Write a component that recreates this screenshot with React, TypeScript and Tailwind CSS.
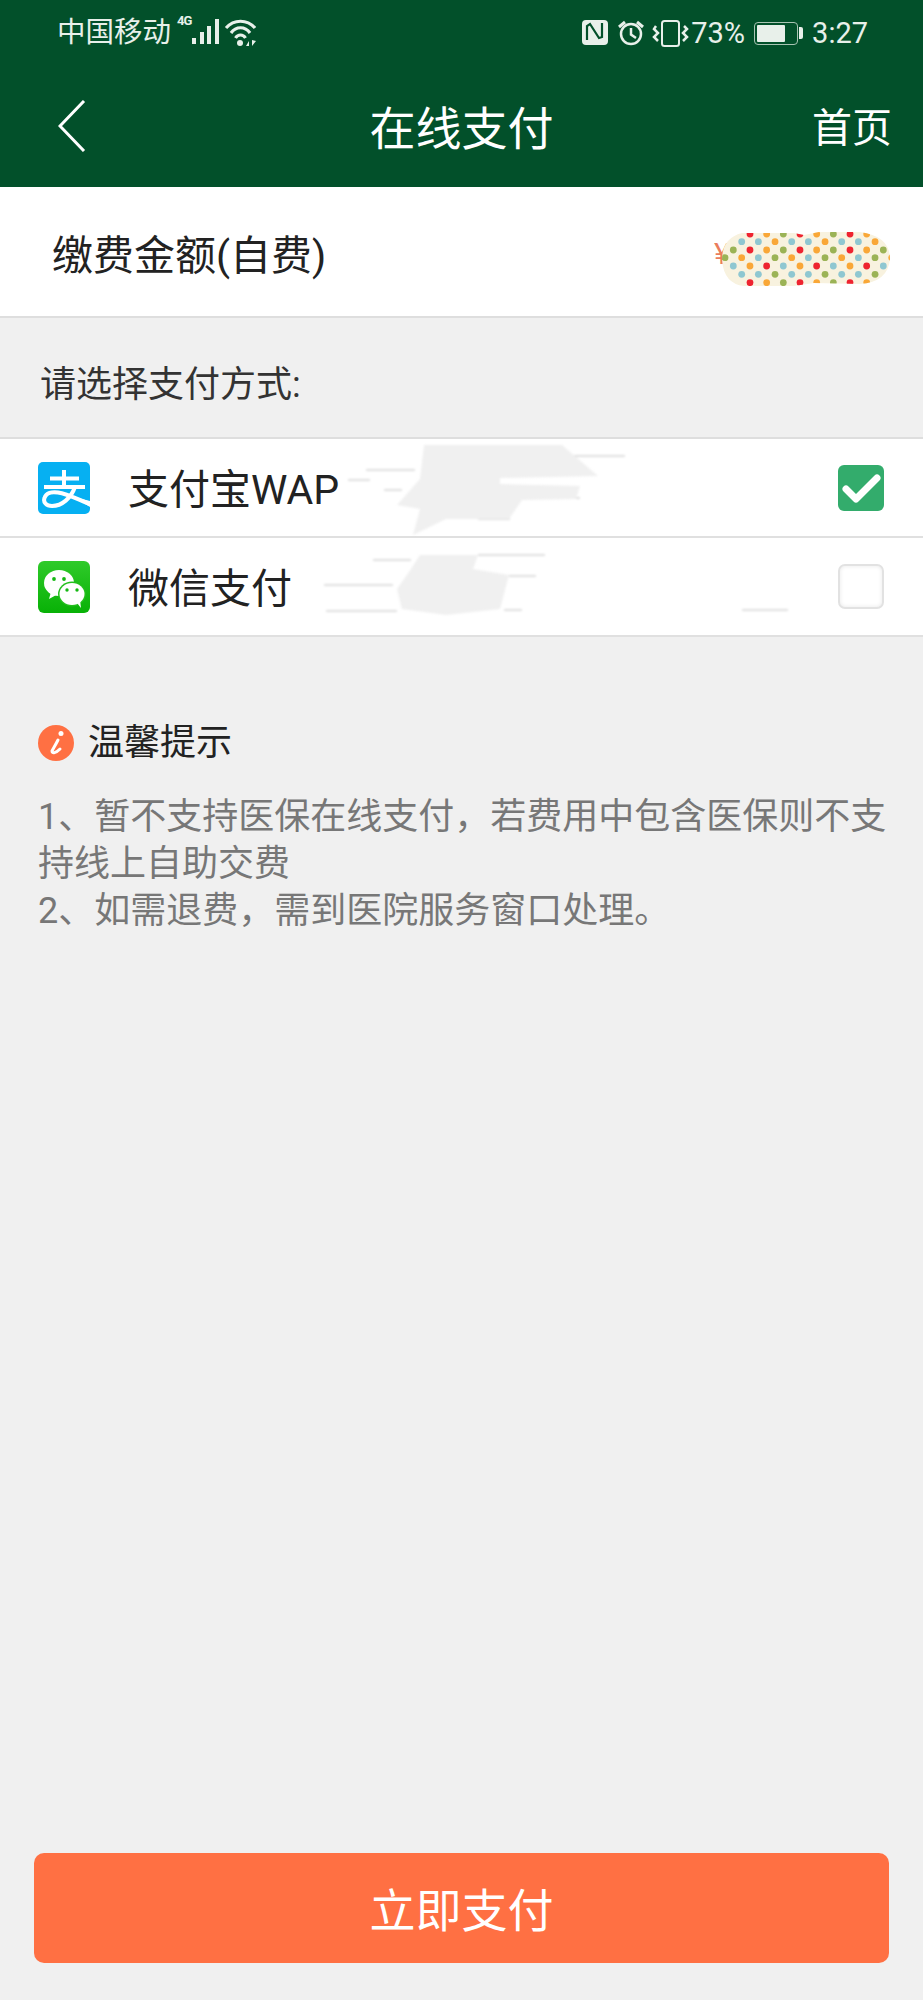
const fontStack = "font-['Roboto','Noto_Sans_CJK_SC',sans-serif]";

const T = '#8fc7d1';
const O = '#f9a737';
const G = '#9bb356';
const R = '#ee2430';

// polka dots over the hidden amount, one entry per row of the pattern
const dotRows = [
    { y: 2, start: 36, colors: [R, O, G] },
    { y: 9.7, start: 27.7, colors: [T, T, O] },
    { y: 18, start: 19.3, colors: [G, R, O] },
    { y: 25.7, start: 11, colors: [G, O, T] },
    { y: 34, start: 19.3, colors: [T, O, R] },
    { y: 42.3, start: 27.7, colors: [T, T, G] },
    { y: 50.7, start: 36, colors: [R, O, G] },
];

function AmountMask() {
    return (
        <svg width="176" height="54" viewBox="0 0 176 54" className="mt-[15px] block">
            <defs>
                <clipPath id="pill">
                    <path d="M28 1 L80 1 L90 3 L105 0 L146 0 Q176 4 176 27 Q174 50 146 52 L100 51 L80 54 L30 54 Q10 52 8 28 Q8 6 28 1Z" />
                </clipPath>
            </defs>
            <text x="0" y="32" fontSize="30" fill="#ea7d5c">¥</text>
            <g clipPath="url(#pill)">
                <rect width="176" height="54" fill="#f8f2df" />
                {dotRows.map((row) =>
                    Array.from({ length: 11 }, (_, col) => (
                        <circle key={`${row.y}-${col}`} cx={row.start + col * 16.67} cy={row.y} r="3.4" fill={row.colors[col % 3]} />
                    )),
                )}
            </g>
        </svg>
    );
}

function AlipayIcon() {
    return (
        <svg width="52" height="52" viewBox="0 0 52 52" className="shrink-0">
            <rect width="52" height="52" rx="5" fill="#06b0f2" />
            <path d="M26 8 V25 M12 16.500 H41 M6 25 H47" stroke="#fff" strokeWidth="4" fill="none" />
            <path d="M37 25 C33 36 24 44 14 44 C8 44 5 40 6.500 36 C8 31 14 29.500 20 30.500 C30 32 41 38 52 42" stroke="#fff" strokeWidth="4" fill="none" />
            <path d="M36 35 L52 39 V45 Z" fill="#fff" />
        </svg>
    );
}

function WechatIcon() {
    return (
        <svg width="52" height="52" viewBox="0 0 52 52" className="shrink-0">
            <defs>
                <linearGradient id="wx" x1="0" y1="0" x2="0" y2="1">
                    <stop offset="0" stopColor="#2fca2a" />
                    <stop offset="1" stopColor="#08b106" />
                </linearGradient>
            </defs>
            <rect width="52" height="52" rx="6" fill="url(#wx)" />
            <ellipse cx="21" cy="22" rx="15" ry="13" fill="#fff" />
            <path d="M13 31 L11 38 L20 33Z" fill="#fff" />
            <ellipse cx="34" cy="33" rx="14" ry="12.500" fill="#22bf1c" />
            <ellipse cx="34" cy="33" rx="12.500" ry="11" fill="#fff" />
            <path d="M39 42 L43 47 L42 39Z" fill="#fff" />
            <circle cx="16" cy="18" r="1.900" fill="#14b812" />
            <circle cx="26" cy="18" r="1.900" fill="#14b812" />
            <circle cx="29" cy="29" r="1.700" fill="#14b812" />
            <circle cx="39" cy="29" r="1.700" fill="#14b812" />
        </svg>
    );
}

function StatusLeftIcons() {
    return (
        <div className="flex items-start">
            <span className="mt-[-5px] w-[15px] text-[13px] font-bold leading-[14px] tracking-[-1px]">4G</span>
            <svg width="27" height="26" viewBox="0 0 27 26">
                <path d="M0 19h4v6H0zM8 13h4v12H8zM15 7h4v18h-4zM23 0h4v25h-4z" fill="currentColor" />
            </svg>
            <svg width="33" height="28" viewBox="0 0 33 28" className="ml-[5px]">
                <path d="M2 9 C10 0 23 0 31 9 M7 14 C12 7 21 7 26 14 M11.500 19 C14 15 19 15 21.500 19" stroke="currentColor" strokeWidth="3.200" fill="none" />
                <circle cx="16" cy="24" r="3" fill="currentColor" />
                <path d="M25 27v-5l-3 5zM28 21v6l4-5z" fill="currentColor" />
            </svg>
        </div>
    );
}

function StatusRightIcons() {
    return (
        <svg width="107" height="28" viewBox="0 0 107 28" className="shrink-0">
            <rect x="0" y="1" width="26" height="25" rx="4" fill="currentColor" />
            <path d="M5 21 V7 L8 5 L17 19 L20 18 V4" stroke="#02502a" strokeWidth="2.200" fill="none" />
            <circle cx="49" cy="15" r="10" stroke="currentColor" strokeWidth="2.500" fill="none" />
            <path d="M49 9 V15.500 L54 19" stroke="currentColor" strokeWidth="2.500" fill="none" />
            <path d="M37 8 L43 3 M61 8 L55 3" stroke="currentColor" strokeWidth="3" fill="none" />
            <rect x="80" y="2" width="17" height="25" rx="2.500" stroke="currentColor" strokeWidth="2" fill="none" />
            <path d="M74 7 L72 10 L76 14 L72 18 L76 22 M102 7 L105 10 L101 14 L105 18 L101 22" stroke="currentColor" strokeWidth="2.500" fill="none" />
        </svg>
    );
}

function BatteryIcon() {
    return (
        <div className="flex items-center gap-[1px]">
            <div className="flex h-[23px] w-[44px] items-center rounded-[4px] border-[1.5px] border-[#a9c4b3] p-[2px]">
                <div className="h-full w-[73%] rounded-[1px] bg-[#e8f0ea]" />
            </div>
            <div className="h-[12px] w-[4px] rounded-r-[2px] bg-[#e8f0ea]" />
        </div>
    );
}

// the scribbled-out part of the two payment rows
function Smudges() {
    const streaks = [
        [366, 468, 415], [348, 478, 370], [384, 488, 402], [562, 454, 625], [522, 496, 580], [478, 517, 510],
        [373, 558, 411], [478, 553, 545], [324, 583, 393], [509, 574, 536], [326, 609, 397], [504, 608, 522], [742, 608, 788],
    ];
    return (
        <svg width="923" height="200" viewBox="0 437 923 200" className="pointer-events-none absolute left-0 top-0 blur-[1px]">
            {streaks.map(([x1, y, x2]) => (
                <line key={`${x1}-${y}`} x1={x1} y1={y} x2={x2} y2={y} stroke="#d6d6d6" strokeWidth="1.500" />
            ))}
            <path d="M424 443 L562 443 L598 474 L500 476 L500 482 L580 484 L576 497 L522 498 L509 517 L446 517 L413 533 L420 507 L397 503 L420 477Z" fill="#f0f0f0" />
            <path d="M420 553 L478 553 L473 567 L509 573 L500 607 L446 613 L402 607 L397 587 L411 567Z" fill="#f0f0f0" />
        </svg>
    );
}

export default function App() {
    return (
        <div className={`flex h-[2000px] w-[923px] flex-col bg-[#f0f0f0] ${fontStack}`}>
            <div className="h-[187px] bg-[#02502a] text-white">
                <div className="flex h-[66px] items-center justify-between pl-[57px] pr-[55px] text-[29px] leading-none text-[#e8f0ea]">
                    <div className="flex items-center gap-[6px]">
                        <span className="text-[28.500px]">中国移动</span>
                        <StatusLeftIcons />
                    </div>
                    <div className="flex items-center">
                        <StatusRightIcons />
                        <span className="ml-[2px] mr-[9px]">73%</span>
                        <BatteryIcon />
                        <span className="ml-[9px]">3:27</span>
                    </div>
                </div>
                <div className="relative flex h-[121px] items-center justify-between pl-[58px] pr-[31px]">
                    <svg width="28" height="52" viewBox="0 0 28 52" className="mt-[-2px]">
                        <path d="M26 1 L2 26 L26 51" stroke="#fff" strokeWidth="3" fill="none" />
                    </svg>
                    <span className="absolute left-0 right-0 mt-[5px] text-center text-[46px] leading-none">在线支付</span>
                    <span className="mt-[5px] text-[40px] leading-none">首页</span>
                </div>
            </div>

            <div className="flex h-[131px] items-center justify-between border-b-2 border-[#dedede] bg-white pl-[52px] pr-[33px]">
                <span className="mt-[10px] text-[41px] leading-none text-[#222]">缴费金额(自费)</span>
                <AmountMask />
            </div>

            <div className="flex h-[119px] items-center pl-[40px] text-[36px] text-[#333]">
                <span className="mt-[14px]">请选择支付方式:</span>
            </div>

            <div className="relative border-t-2 border-[#dedede] bg-white">
                <div className="flex h-[99px] items-center border-b-2 border-[#e0e0e0] pl-[38px] pr-[39px]">
                    <AlipayIcon />
                    <span className="ml-[38px] mt-[5px] text-[41px] leading-none text-[#222]">支付宝WAP</span>
                    <div className="ml-auto flex h-[46px] w-[46px] items-center justify-center rounded-[6px] bg-[#33ac6c]">
                        <svg width="40" height="32" viewBox="0 0 40 32">
                            <path d="M5 17 L15 27 L36 6" stroke="#fff" strokeWidth="7" strokeLinecap="round" strokeLinejoin="round" fill="none" />
                        </svg>
                    </div>
                </div>
                <div className="flex h-[99px] items-center border-b-2 border-[#e0e0e0] pl-[38px] pr-[39px]">
                    <WechatIcon />
                    <span className="ml-[38px] mt-[5px] text-[41px] leading-none text-[#222]">微信支付</span>
                    <div className="ml-auto h-[45px] w-[46px] rounded-[7px] border-2 border-[#e2e2e2] bg-white shadow-[inset_0_0_4px_#e8e8e8]" />
                </div>
                <Smudges />
            </div>

            <div className="flex-1 pl-[38px] pr-[36px] pt-[83px]">
                <div className="flex items-center gap-[14px]">
                    <svg width="36" height="36" viewBox="0 0 36 36">
                        <circle cx="18" cy="18" r="18" fill="#ff7043" />
                        <circle cx="23" cy="8.500" r="2.500" fill="#fff" />
                        <path d="M20 15 C18 19 15 24 14 26 C14 29 18 28 22 24" stroke="#fff" strokeWidth="3" strokeLinecap="round" fill="none" />
                    </svg>
                    <span className="text-[36px] leading-[46px] text-[#222]">温馨提示</span>
                </div>
                <p className="mt-[28px] text-[36px] leading-[47px] text-[#777]">
                    1、暂不支持医保在线支付，若费用中包含医保则不支持线上自助交费
                    <br />
                    2、如需退费，需到医院服务窗口处理。
                </p>
            </div>

            <div className="px-[34px] pb-[37px]">
                <button className="h-[110px] w-full rounded-[10px] bg-[#ff7043] pt-[6px] text-[46px] text-white">立即支付</button>
            </div>
        </div>
    );
}
